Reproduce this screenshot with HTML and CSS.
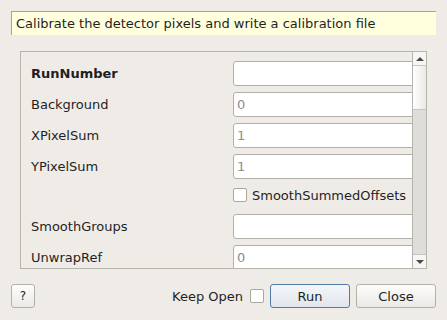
FILE: index.html
```
<!DOCTYPE html>
<html>

<head>
	<meta charset="utf-8" />
	<meta name="viewport" content="width=device-width">
	<link rel="stylesheet" href="styles.css">
</head>

<body>
	<div class="dialog">
		<div class="description">Calibrate the detector pixels and write a calibration file</div>

		<div class="scroll-area">
			<div class="form">
				<span class="label bold">RunNumber</span>
				<input class="field" type="text">

				<span class="label">Background</span>
				<input class="field" type="text" placeholder="0">

				<span class="label">XPixelSum</span>
				<input class="field" type="text" placeholder="1">

				<span class="label">YPixelSum</span>
				<input class="field" type="text" placeholder="1">

				<span></span>
				<label class="check-row">
					<span class="check"></span>
					<span>SmoothSummedOffsets</span>
				</label>

				<span class="label">SmoothGroups</span>
				<input class="field" type="text">

				<span class="label">UnwrapRef</span>
				<input class="field" type="text" placeholder="0">
			</div>
			<div class="scrollbar">
				<div class="arrow-btn up"><span class="tri-up"></span></div>
				<div class="thumb"></div>
				<div class="track"></div>
				<div class="arrow-btn down"><span class="tri-down"></span></div>
			</div>
		</div>

		<div class="buttons">
			<button class="btn help">?</button>
			<span class="spacer"></span>
			<span class="keep-open">Keep Open</span>
			<span class="check keep-check"></span>
			<button class="btn run">Run</button>
			<button class="btn close">Close</button>
		</div>
	</div>
</body>

</html>
```

FILE: styles.css
```
body {
	margin: 0;
	width: 447px;
	height: 320px;
	overflow: hidden;
	background-color: #efece8;
	font-family: "DejaVu Sans", Sans-Serif;
	font-size: 13px;
	color: #1f1f1f;
}

.dialog {
	display: flex;
	flex-direction: column;
	padding: 11px;
}

.description {
	box-sizing: border-box;
	height: 24px;
	width: 425px;
	line-height: 23px;
	padding-left: 4px;
	background-color: #ffffde;
	border-top: 1px solid #a6a29c;
	border-left: 1px solid #a6a29c;
	white-space: nowrap;
}

.scroll-area {
	box-sizing: border-box;
	display: flex;
	width: 407px;
	height: 218px;
	margin: 16px 0 0 9px;
	border: 1px solid #b7b3ad;
	overflow: hidden;
}

.form {
	flex: 1;
	overflow: hidden;
	display: grid;
	grid-template-columns: 202px 1fr;
	grid-template-rows: repeat(4, 25px) 23px repeat(2, 25px);
	row-gap: 6px;
	padding: 9px 0 0 10px;
}

.label {
	display: flex;
	align-items: center;
	white-space: nowrap;
}

.bold {
	font-weight: bold;
}

.field {
	box-sizing: border-box;
	width: 200px;
	height: 25px;
	margin: 0;
	padding: 0 3px;
	font-family: inherit;
	font-size: 13px;
	background-color: #ffffff;
	border: 1px solid #b3afa9;
	border-radius: 3px;
	outline: none;
}

.field::placeholder {
	color: #8c8c8c;
}

.check-row {
	display: flex;
	align-items: center;
	gap: 5px;
	padding-bottom: 3px;
	white-space: nowrap;
}

.check {
	box-sizing: border-box;
	display: inline-block;
	width: 14px;
	height: 14px;
	background-color: #ffffff;
	border: 1px solid #aaa6a0;
	border-radius: 2px;
	flex: none;
}

.scrollbar {
	display: flex;
	flex-direction: column;
	width: 13px;
	border-left: 1px solid #b7b3ad;
}

.arrow-btn {
	height: 13px;
	display: flex;
	align-items: center;
	justify-content: center;
	background-color: #f7f6f4;
}

.arrow-btn.up {
	border-bottom: 1px solid #c8c5c0;
}

.arrow-btn.down {
	border-top: 1px solid #c8c5c0;
}

.tri-up {
	width: 0;
	height: 0;
	border-left: 4px solid transparent;
	border-right: 4px solid transparent;
	border-bottom: 4px solid #4a4a4a;
}

.tri-down {
	width: 0;
	height: 0;
	border-left: 4px solid transparent;
	border-right: 4px solid transparent;
	border-top: 4px solid #4a4a4a;
}

.thumb {
	height: 43px;
	background: linear-gradient(to right, #ffffff, #ebe9e6);
	border-bottom: 1px solid #c8c5c0;
}

.track {
	flex: 1;
	background-color: #dfddda;
}

.buttons {
	display: flex;
	align-items: center;
	height: 24px;
	margin-top: 15px;
	width: 425px;
}

.spacer {
	flex: 1;
}

.btn {
	box-sizing: border-box;
	height: 24px;
	margin: 0;
	padding: 0;
	font-family: inherit;
	font-size: 13px;
	color: #1f1f1f;
	border: 1px solid #b3afa9;
	border-radius: 3px;
	background: linear-gradient(to bottom, #fdfdfc, #ebe9e6);
}

.help {
	width: 24px;
	font-size: 12px;
}

.keep-open {
	white-space: nowrap;
}

.keep-check {
	margin: 0 6px 0 7px;
}

.run {
	width: 80px;
	border-color: #4f7ba7;
	background: linear-gradient(to bottom, #f4f6f9, #e0e6ed);
}

.close {
	width: 80px;
	margin-left: 6px;
}
```
